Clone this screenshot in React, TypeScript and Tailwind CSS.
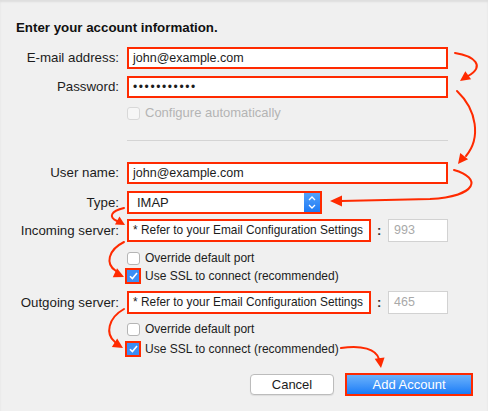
import React from 'react';

const RED = '#ff2a00';

function head(tx: number, ty: number, angle: number, len = 10, half = 5) {
  const a = (angle * Math.PI) / 180;
  const bx = tx - Math.cos(a) * len;
  const by = ty - Math.sin(a) * len;
  const px = -Math.sin(a) * half;
  const py = Math.cos(a) * half;
  return `${tx},${ty} ${bx + px},${by + py} ${bx - px},${by - py}`;
}

function Arrows() {
  return (
    <svg className="pointer-events-none absolute left-0 top-0" width="488" height="411" viewBox="0 0 488 411">
      <g fill="none" stroke={RED} strokeWidth="2" strokeLinecap="round">
        <path d="M455 53 C474 56 486 66 468 76" />
        <path d="M457 91 C477 110 481 138 466 156" />
        <path d="M454 170 C482 178 478 196 430 199 L341 201" />
        <path d="M124 208 C111 211 108 217 117 221" />
        <path d="M124 242 C108 250 105 264 116 271" />
        <path d="M124 309 C108 318 105 334 115 342" />
        <path d="M341 348 C362 345 376 349 379 359" />
      </g>
      <g fill={RED}>
        <polygon points={head(460, 81, 145)} />
        <polygon points={head(458, 164, 128)} />
        <polygon points={head(330, 201, 180, 12, 5.5)} />
        <polygon points={head(125, 225, 30, 9, 4.5)} />
        <polygon points={head(124, 277, 25, 10, 5)} />
        <polygon points={head(123, 348, 32, 10, 5)} />
        <polygon points={head(381, 368, 82, 10, 5)} />
      </g>
    </svg>
  );
}

function Label({ children }: { children: React.ReactNode }) {
  return <div className="w-[119px] shrink-0 text-right text-[13.3px] text-[#1c1c1c]">{children}</div>;
}

function Field({ children, width = 'w-[321px]', small = false }: { children?: React.ReactNode; width?: string; small?: boolean }) {
  return (
    <div
      className={`${width} ml-2 flex h-full shrink-0 items-center overflow-hidden whitespace-nowrap border-2 border-[#ff2a00] bg-white pl-[4px] text-[#1c1c1c] ${small ? 'text-[11.9px]' : 'text-[12.5px]'}`}
    >
      {children}
    </div>
  );
}

function Box({ checked = false, dim = false }: { checked?: boolean; dim?: boolean }) {
  if (checked) {
    return (
      <div className="flex h-4 w-4 items-center justify-center border-2 border-[#ff2a00]">
        <div className="flex h-[12px] w-[12px] items-center justify-center bg-[#3b8ef6]">
          <svg width="9" height="8" viewBox="0 0 9 8">
            <path d="M1 4.2 L3.4 6.6 L8 1" fill="none" stroke="white" strokeWidth="1.6" />
          </svg>
        </div>
      </div>
    );
  }
  return (
    <div
      className={`h-[13px] w-[13px] rounded-[3px] border ${dim ? 'border-[#d8d8d8] bg-[#f6f6f6]' : 'border-[#b5b5b5] bg-white'}`}
    />
  );
}

function Check({ label, checked = false, dim = false }: { label: string; checked?: boolean; dim?: boolean }) {
  return (
    <div className={`flex h-4 items-center ${checked ? 'ml-[125px] gap-1' : 'ml-[127px] gap-[5px]'}`}>
      <Box checked={checked} dim={dim} />
      <span className={`whitespace-nowrap ${dim ? 'text-[13px] text-[#b4b4b4]' : 'text-[12px] text-[#1c1c1c]'}`}>{label}</span>
    </div>
  );
}

function Port({ value }: { value: string }) {
  return (
    <>
      <span className="ml-[6px] w-[11px] shrink-0 text-[13px] font-bold text-[#333]">:</span>
      <div className="flex h-full w-[60px] shrink-0 items-center border border-[#d2d2d2] bg-white pl-[5px] text-[12.5px] text-[#a9a9a9]">
        {value}
      </div>
    </>
  );
}

export default function App() {
  return (
    <div
      className="relative h-[411px] w-[488px] overflow-hidden bg-[#f0f0f0] shadow-[inset_0_2px_2px_rgba(0,0,0,0.08)]"
      style={{ fontFamily: '"Liberation Sans", Arial, sans-serif' }}
    >
      <div className="flex flex-col">
        <div className="ml-4 mt-[20px] h-4 text-[13.3px] font-bold leading-4 text-[#111]">
          Enter your account information.
        </div>

        <div className="mt-[11px] flex h-[22px] items-center">
          <Label>E-mail address:</Label>
          <Field>john@example.com</Field>
        </div>

        <div className="mt-[7px] flex h-[22px] items-center">
          <Label>Password:</Label>
          <Field>
            <span className="text-[12px] tracking-[1.6px]">•••••••••••</span>
          </Field>
        </div>

        <div className="mt-[7px]">
          <Check label="Configure automatically" dim />
        </div>

        <div className="ml-[127px] mt-[19px] h-px w-[321px] bg-[#d4d4d4]" />

        <div className="mt-[21px] flex h-[22px] items-center">
          <Label>User name:</Label>
          <Field>john@example.com</Field>
        </div>

        <div className="mt-[7px] flex h-[23px] items-center">
          <Label>Type:</Label>
          <div className="ml-2 flex h-full w-[195px] items-stretch border-2 border-[#ff2a00] bg-white">
            <div className="flex flex-1 items-center pl-[8px] text-[13px] text-[#1c1c1c]">IMAP</div>
            <div className="flex w-[16px] flex-col items-center justify-center gap-[3px] bg-gradient-to-b from-[#52a2fb] to-[#1b79f4]">
              <svg width="8" height="5" viewBox="0 0 8 5">
                <path d="M1 4 L4 1 L7 4" fill="none" stroke="white" strokeWidth="1.3" />
              </svg>
              <svg width="8" height="5" viewBox="0 0 8 5">
                <path d="M1 1 L4 4 L7 1" fill="none" stroke="white" strokeWidth="1.3" />
              </svg>
            </div>
          </div>
        </div>

        <div className="mt-[5px] flex h-[23px] items-center">
          <Label>Incoming server:</Label>
          <Field width="w-[244px]" small>* Refer to your Email Configuration Settings</Field>
          <Port value="993" />
        </div>

        <div className="mt-[8px]">
          <Check label="Override default port" />
        </div>
        <div className="mt-[2px]">
          <Check label="Use SSL to connect (recommended)" checked />
        </div>

        <div className="mt-[7px] flex h-[23px] items-center">
          <Label>Outgoing server:</Label>
          <Field width="w-[244px]" small>* Refer to your Email Configuration Settings</Field>
          <Port value="465" />
        </div>

        <div className="mt-[7px]">
          <Check label="Override default port" />
        </div>
        <div className="mt-[4px]">
          <Check label="Use SSL to connect (recommended)" checked />
        </div>

        <div className="mt-[16px] flex h-[23px] items-center">
          <button className="ml-[250px] flex h-[21px] w-[84px] items-center justify-center rounded-[4px] border border-[#bcbcbc] bg-white text-[13px] text-[#1c1c1c] shadow-[0_1px_1px_rgba(0,0,0,0.08)]">
            Cancel
          </button>
          <div className="ml-[11px] h-[23px] w-[128px] border-2 border-[#ff2a00]">
            <button className="flex h-full w-full items-center justify-center bg-gradient-to-b from-[#6ab2fb] to-[#167cf7] text-[13px] text-white">
              Add Account
            </button>
          </div>
        </div>
      </div>
      <Arrows />
    </div>
  );
}
